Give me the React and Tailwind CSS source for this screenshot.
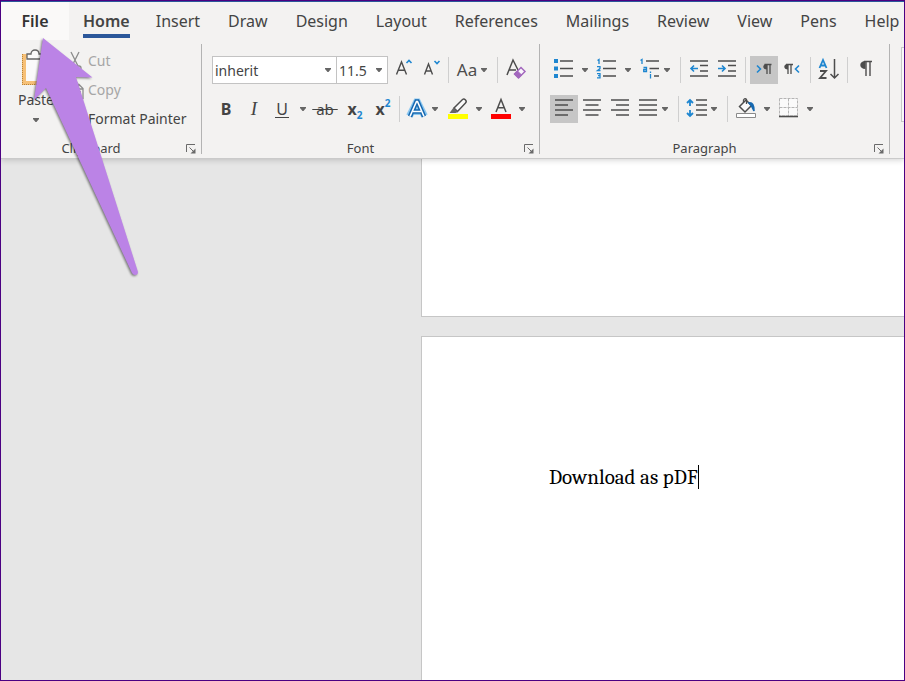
import React from "react";

const INK = "#4d4d4d";
const BLUE = "#1e86d0";

const tabs = ["Insert", "Draw", "Design", "Layout", "References", "Mailings", "Review", "View", "Pens", "Help"];

function Caret() {
  return (
    <svg width="6" height="4" viewBox="0 0 6 4" aria-hidden="true">
      <path d="M0 0H6V1L3.500 4H2.500L0 1Z" fill="#666" />
    </svg>
  );
}

function Icon({ children, narrow }) {
  return (
    <svg
      className={narrow ? "h-7 w-6" : "h-7 w-7"}
      viewBox={narrow ? "0 0 24 28" : "0 0 28 28"}
      fill="none"
      stroke={INK}
      strokeWidth="1.6"
      aria-hidden="true"
    >
      {children}
    </svg>
  );
}

function Tool({ label, active, children }) {
  return (
    <button
      type="button"
      aria-label={label}
      aria-pressed={active}
      className={`flex h-7 w-7 shrink-0 items-center justify-center ${active ? "bg-[#c6c6c6]" : "hover:bg-[#dedede]"}`}
    >
      {children}
    </button>
  );
}

function Split({ label, narrow, children }) {
  return (
    <div className={`flex shrink-0 ${narrow ? "w-10" : "w-[43px]"}`}>
      <button type="button" aria-label={label} className={`flex h-7 items-center justify-center hover:bg-[#dedede] ${narrow ? "w-6" : "w-7"}`}>
        {children}
      </button>
      <button type="button" aria-label={`${label} options`} className="flex h-7 w-[14px] items-center justify-center hover:bg-[#dedede]">
        <Caret />
      </button>
    </div>
  );
}

function Sep() {
  return <span className="mx-1 h-[26px] w-px shrink-0 bg-[#cfcfcf]" />;
}

function Group({ title, className, children }) {
  return (
    <section aria-label={title} className={`flex shrink-0 flex-col ${className}`}>
      <div className="flex-1">{children}</div>
      <div className="flex h-[18px] items-center">
        <span className="flex-1 text-center text-[13px] text-[#444]">{title}</span>
        <button type="button" aria-label={`${title} settings`} className="flex w-5 justify-center">
          <svg width="10" height="10" viewBox="0 0 10 10" fill="none" stroke="#6a6a6a" aria-hidden="true">
            <path d="M.5 8V.5H9M3.5 3.5L8 8" />
            <path d="M9.5 4.5V9.5H4.5Z" fill="#6a6a6a" stroke="none" />
          </svg>
        </button>
      </div>
    </section>
  );
}

function Combo({ label, value, className }) {
  return (
    <div className={`flex h-7 shrink-0 items-center border border-[#c3c3c3] bg-white ${className}`}>
      <input aria-label={label} defaultValue={value} className="min-w-0 flex-1 bg-transparent pl-[2px] text-[14px] text-[#444] outline-none" />
      <button type="button" aria-label={`${label} list`} className="flex h-full w-4 items-center justify-center">
        <Caret />
      </button>
    </div>
  );
}

function ClipboardGroup() {
  return (
    <Group title="Clipboard" className="w-[200px]">
      <div className="flex pt-[6px]">
        <button type="button" className="ml-[13px] flex w-11 flex-col items-center text-[14px] leading-5 text-[#444]">
          <svg width="30" height="40" viewBox="0 0 30 40" fill="none" aria-hidden="true">
            <path d="M1 8H27V39H1Z" fill="#f6c077" />
            <path d="M1.500 8V39M1 38.500H27" stroke="#b88438" strokeDasharray="1 1" />
            <path d="M5 12H23V35H5Z" fill="#fafafa" />
            <path d="M6 13V8H10C10 5 12 4 14 4S18 5 18 8H22V13Z" fill="#fafafa" stroke="#666" strokeWidth="1.300" />
          </svg>
          <span className="mt-1">Paste</span>
          <span className="flex h-5 items-center"><Caret /></span>
        </button>
        <div className="flex flex-col pl-[9px] text-[14px]">
          <button type="button" disabled className="flex h-[29px] items-center gap-1 text-[#a6a6a6]">
            <svg width="17" height="24" viewBox="0 0 17 24" fill="none" stroke="#8c8c8c" strokeWidth="1.300" aria-hidden="true">
              <path d="M4 3L11 17M12 3L5 17" />
              <circle cx="4" cy="19" r="2" />
              <circle cx="12" cy="19" r="2" />
            </svg>
            Cut
          </button>
          <button type="button" disabled className="flex h-[29px] items-center gap-1 text-[#a6a6a6]">
            <svg width="17" height="20" viewBox="0 0 17 20" fill="none" stroke="#8c8c8c" strokeWidth="1.300" aria-hidden="true">
              <path d="M6 14H2V1H8L11 4" />
              <path d="M6.500 4.500H12L16 8.500V18.500H6.500ZM11.500 5V9H16M9 12H14M9 15H14" />
            </svg>
            Copy
          </button>
          <button type="button" className="flex h-[29px] items-center gap-1 whitespace-nowrap text-[#444]">
            <svg width="17" height="20" viewBox="0 0 17 20" fill="none" aria-hidden="true">
              <path d="M9 7L14 2L16 4L11 9" stroke="#555" />
              <path d="M6 6L12 12L6 17L2 12Z" fill="#f6c077" />
            </svg>
            Format Painter
          </button>
        </div>
      </div>
    </Group>
  );
}

function FontGroup() {
  return (
    <Group title="Font" className="w-[337px]">
      <div className="flex flex-col gap-[11px] pt-4 pl-[10px]">
        <div className="flex h-7 items-center">
          <Combo label="Font name" value="inherit" className="w-[125px]" />
          <Combo label="Font size" value="11.5" className="-ml-px w-[52px]" />
          <Tool label="Grow font">
            <Icon>
              <path d="M8.500 18.500L13.500 6L18.500 18.500M10.200 14.300H16.800" strokeWidth="1.400" />
              <path d="M18.500 7L21 4.500L23.500 7" stroke={BLUE} />
            </Icon>
          </Tool>
          <Tool label="Shrink font">
            <Icon>
              <path d="M8.500 18.500L12.500 8L16.500 18.500M10 15H15" strokeWidth="1.400" />
              <path d="M18.500 5L21 7.500L23.500 5" stroke={BLUE} />
            </Icon>
          </Tool>
          <Sep />
          <Split narrow label="Change case">
            <span className="pl-1 text-[17px] text-[#4d4d4d]">Aa</span>
          </Split>
          <Sep />
          <Tool label="Clear formatting">
            <Icon>
              <path d="M5 19L11 4L16 14M7 14H14" strokeWidth="1.500" />
              <path d="M12.500 18L19 11.500L23 15.500L16.500 22Z" fill="#faf6fc" stroke="#a267bd" strokeWidth="1.500" />
              <path d="M12.500 18L15.500 15L19.500 19L16.500 22Z" fill="#a267bd" stroke="#a267bd" strokeWidth="1" />
            </Icon>
          </Tool>
        </div>
        <div className="flex h-7 items-center">
          <Tool label="Bold"><span className="text-[16px] font-bold text-[#444]">B</span></Tool>
          <Tool label="Italic"><span className="font-['Liberation_Serif',serif] text-[19px] italic text-[#444]">I</span></Tool>
          <Split label="Underline">
            <span className="border-b border-[#444] px-px text-[16px] leading-4 text-[#444]">U</span>
          </Split>
          <Tool label="Strikethrough"><span className="text-[15px] text-[#444]"><s>&nbsp;ab&nbsp;</s></span></Tool>
          <Tool label="Subscript">
            <span className="flex items-end pl-1 text-[16px] leading-5 font-bold text-[#444]">
              x<span className="-mb-1 text-[10px] leading-4 text-[#1e86d0]">2</span>
            </span>
          </Tool>
          <Tool label="Superscript">
            <span className="flex items-start pl-1 text-[16px] leading-5 font-bold text-[#444]">
              x<span className="-mt-1 text-[10px] leading-4 text-[#1e86d0]">2</span>
            </span>
          </Tool>
          <Sep />
          <Split narrow label="Text effects">
            <Icon narrow>
              <path d="M5.500 21L12.500 7H13.500L20.500 21M9 16.500H17.500" stroke="#8cc8f0" strokeWidth="7" />
              <path d="M6 21.500L12.500 6.500H13.500L20 21.500M9 16.500H17" stroke="#1668b0" strokeWidth="4.500" />
              <path d="M6 21.500L12.500 6.500H13.500L20 21.500M9 16.500H17" stroke="#fff" strokeWidth="1.600" />
            </Icon>
          </Split>
          <Split label="Highlight colour">
            <Icon>
              <path d="M10 13L18.500 4.500Q20 3.500 21.500 5T21.500 8L13.500 16.500Z" fill="#fafafa" strokeWidth="1.500" />
              <path d="M9.500 12.500L14 17L11.500 18H5.500Z" fill="#666" stroke="none" />
              <path d="M4 19H24V24H4Z" fill="#ffff00" stroke="none" />
            </Icon>
          </Split>
          <Split label="Font colour">
            <Icon>
              <path d="M9 17L14 4.500L19 17M10.700 12.700H17.300" strokeWidth="1.500" />
              <path d="M4 19H24V24H4Z" fill="#ff0000" stroke="none" />
            </Icon>
          </Split>
        </div>
      </div>
    </Group>
  );
}

function ParagraphGroup() {
  return (
    <Group title="Paragraph" className="w-[349px]">
      <div className="flex flex-col gap-[11px] pt-4 pl-[10px]">
        <div className="flex h-7 items-center">
          <Split label="Bullets">
            <Icon>
              <path d="M4 3H8V7H4ZM4 10.500H8V14.500H4ZM4 18H8V22H4Z" fill={BLUE} stroke="none" />
              <path d="M10 5H23M10 12.500H23M10 20H23" />
            </Icon>
          </Split>
          <Split label="Numbering">
            <Icon>
              <path d="M4.500 4.500L6 3.500V8M4 10.700H7V12.500L4.500 14.500H7.500M4 17.700H7V21.800H4M5 19.700H7" stroke={BLUE} strokeWidth="1.300" />
              <path d="M10 5H23M10 12.500H23M10 20H23" />
            </Icon>
          </Split>
          <Split narrow label="Multilevel list">
            <Icon narrow>
              <path d="M4.500 4.500L6 3.500V8M7.500 11.500H10.500V15.500H7.700V13.500H10.500M14.500 18V22.500M14.500 15.500V17" stroke={BLUE} strokeWidth="1.300" />
              <path d="M10 5H23M13.500 12.500H23M18 20H23" />
            </Icon>
          </Split>
          <Sep />
          <Tool label="Decrease indent">
            <Icon>
              <path d="M5 5H23M15 9.500H23M15 15H23M5 20H23" />
              <path d="M13 12.500H6M9 9.500L6 12.500L9 15.500" stroke={BLUE} />
            </Icon>
          </Tool>
          <Tool label="Increase indent">
            <Icon>
              <path d="M5 5H23M15 9.500H23M15 15H23M5 20H23" />
              <path d="M5 12.500H12M9 9.500L12 12.500L9 15.500" stroke={BLUE} />
            </Icon>
          </Tool>
          <Sep />
          <Tool label="Left-to-right" active>
            <Icon>
              <path d="M7 9.500L10.500 13L7 16.500" stroke={BLUE} />
              <path d="M17 13.500C12 13.500 12 8 17 8Z" fill={INK} stroke="none" />
              <path d="M14.500 8.500H21.500M17 8V18M20 8V18" strokeWidth="1.300" />
            </Icon>
          </Tool>
          <Tool label="Right-to-left">
            <Icon>
              <path d="M21 9.500L17.500 13L21 16.500" stroke={BLUE} />
              <path d="M10 13.500C5 13.500 5 8 10 8Z" fill={INK} stroke="none" />
              <path d="M8 8.500H15M10 8V18M13 8V18" strokeWidth="1.300" />
            </Icon>
          </Tool>
          <Sep />
          <Tool label="Sort">
            <Icon>
              <path d="M4.500 12L8 4L11.500 12M6 9.500H10" stroke={BLUE} strokeWidth="1.800" />
              <path d="M5 15H11L5 22H11.500" strokeWidth="1.800" />
              <path d="M19.500 3V22M15.500 18L19.500 22L23.500 18" strokeWidth="1.500" />
            </Icon>
          </Tool>
          <Sep />
          <Tool label="Show paragraph marks">
            <Icon>
              <path d="M13.500 13C6.500 13 6.500 5 13.500 5Z" fill={INK} stroke="none" />
              <path d="M12 5.500H20M14 5V20M18 5V20" strokeWidth="1.400" />
            </Icon>
          </Tool>
        </div>
        <div className="flex h-7 items-center">
          <Tool label="Align left" active>
            <Icon><path d="M5 5H23M5 10H18M5 15H23M5 20H18" /></Icon>
          </Tool>
          <Tool label="Centre">
            <Icon><path d="M5 5H23M7.500 10H20.500M5 15H23M7.500 20H20.500" /></Icon>
          </Tool>
          <Tool label="Align right">
            <Icon><path d="M5 5H23M10 10H23M5 15H23M10 20H23" /></Icon>
          </Tool>
          <Split narrow label="Justify">
            <Icon narrow><path d="M5 5H23M5 10H23M5 15H23M5 20H23" /></Icon>
          </Split>
          <Sep />
          <Split narrow label="Line spacing">
            <Icon narrow>
              <path d="M7 5V11M4 8L7 5L10 8M7 15V21M4 18L7 21L10 18" stroke={BLUE} strokeWidth="1.800" />
              <path d="M13 5H24M13 10H24M13 15H24M13 20H24" />
            </Icon>
          </Split>
          <Sep />
          <Split label="Shading">
            <Icon>
              <path d="M7.500 11.500L14 5L19.500 10.500L13 17Z" fill="#fafafa" strokeWidth="1.500" />
              <path d="M11.500 7.500V5Q13 2.500 14.500 4.500V9" strokeWidth="1.300" />
              <path d="M17 8Q22 7 22 16L19.500 11Z" fill="#1668b0" stroke="#1668b0" />
              <path d="M4.500 18.500H23.500V22.500H4.500Z" fill="#fff" stroke="#8a8a8a" strokeWidth="1" />
            </Icon>
          </Split>
          <Split label="Borders">
            <Icon>
              <path d="M4.500 3.500H22.500V21H4.500Z" fill="#fafafa" stroke="#b4b4b4" strokeWidth="1" strokeDasharray="3 1" />
              <path d="M13.500 3.500V21M4.500 12.500H22.500" stroke="#b4b4b4" strokeWidth="1" strokeDasharray="3 1" />
              <path d="M4 21.500H23" />
            </Icon>
          </Split>
        </div>
      </div>
    </Group>
  );
}

function GroupDivider() {
  return <span className="mt-1 mb-1 w-px shrink-0 bg-[#b3b3b3]" />;
}

export default function App() {
  return (
    <div className="relative flex min-h-screen flex-col overflow-hidden border border-[#4b0082] bg-[#e6e6e6] font-['Noto_Sans','Open_Sans',sans-serif]">
      <header className="relative border-b border-[#cacaca] bg-[#f3f2f1] shadow-[0_1px_6px_rgba(0,0,0,0.18)]">
        <nav aria-label="Ribbon tabs" className="flex h-[39px] items-stretch border-t border-[#2b579a] text-[16px] text-[#444]">
          <button type="button" className="w-[68px] shrink-0 bg-[#faf9f8] font-semibold text-[#333]">File</button>
          <button type="button" className="flex shrink-0 flex-col justify-start pr-3 pl-[14px] font-semibold">
            <span className="h-9 border-b-4 border-[#2b579a] pt-[7px] leading-6">Home</span>
          </button>
          {tabs.map((tab) => (
            <button key={tab} type="button" className="shrink-0 px-[14px]">
              {tab}
            </button>
          ))}
        </nav>
        <div className="flex h-[118px] overflow-hidden">
          <ClipboardGroup />
          <GroupDivider />
          <FontGroup />
          <GroupDivider />
          <ParagraphGroup />
          <GroupDivider />
          <div className="mt-[7px] ml-[11px] h-[75px] flex-1 border border-r-0 border-[#c8c8c8] bg-[#faf9f8]" />
        </div>
      </header>

      <main className="flex flex-1 flex-col gap-[19px] pl-[420px]">
        <div className="h-[158px] border-b border-l border-[#c6c6c6] bg-white" />
        <article className="flex-1 border-t border-l border-[#c6c6c6] bg-white pt-[126px] pl-[127px]">
          <p className="flex items-center font-[Cambria,'Liberation_Serif',serif] text-[21px] leading-7 text-black">
            Download as pDF
            <span className="h-6 w-px bg-black" />
          </p>
        </article>
      </main>

      <svg className="pointer-events-none absolute top-0 left-0 drop-shadow-[-1px_1px_1px_rgba(0,0,0,0.5)]" width="160" height="290" viewBox="1 1 160 290" aria-hidden="true">
        <path d="M43 38L92.500 77.500L76 77L138 272Q138 275 135 275Q133 275 132 273L46 88L34 100Z" fill="#bb83e6" />
      </svg>
    </div>
  );
}
